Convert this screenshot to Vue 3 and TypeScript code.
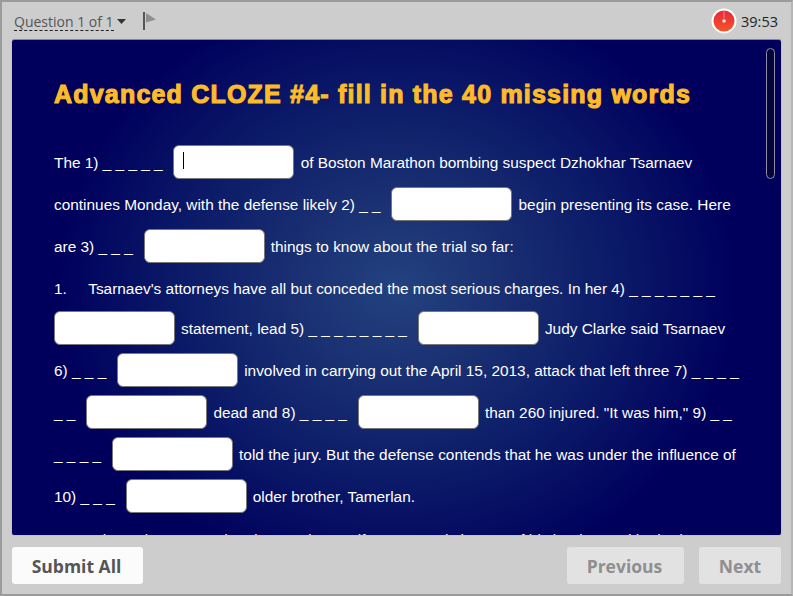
<script setup lang="ts">
type Part = { t: string } | { gap: true }
const T = (t: string): Part => ({ t })
const G: Part = { gap: true }
const lines: { parts: Part[]; short?: boolean }[] = [
  { parts: [T('The 1) _ _ _ _ _'), G, T('of Boston Marathon bombing suspect Dzhokhar Tsarnaev')] },
  { parts: [T('continues Monday, with the defense likely 2) _ _'), G, T('begin presenting its case. Here')] },
  { parts: [T('are 3) _ _ _'), G, T('things to know about the trial so far:')] },
  { parts: [T('1.\u00a0\u00a0\u00a0\u00a0\u00a0Tsarnaev\'s attorneys have all but conceded the most serious charges. In her 4) _ _ _ _ _ _ _')], short: true },
  { parts: [G, T('statement, lead 5) _ _ _ _ _ _ _ _'), G, T('Judy Clarke said Tsarnaev')] },
  { parts: [T('6) _ _ _'), G, T('involved in carrying out the April 15, 2013, attack that left three 7) _ _ _ _')] },
  { parts: [T('_ _'), G, T('dead and 8) _ _ _ _'), G, T('than 260 injured. "It was him," 9) _ _')] },
  { parts: [T('_ _ _ _'), G, T('told the jury. But the defense contends that he was under the influence of')] },
  { parts: [T('10) _ _ _'), G, T('older brother, Tamerlan.')] },
  { parts: [T('Several people contacted and wanted to testify on several charges of his brother and he had')] },
]
</script>

<template>
  <div class="frame">
    <header class="top">
      <div class="q">
        <span class="qlabel">Question 1 of 1</span>
        <svg class="caret" width="9" height="5" viewBox="0 0 9 5"><path d="M0 0h9L4.5 5z" fill="#333" /></svg>
        <svg class="flag" width="14" height="18" viewBox="0 0 14 18">
          <rect x="0" y="0" width="2" height="18" fill="#555" />
          <path d="M3 1l10 6.500-10 3z" fill="#8f8f8f" />
        </svg>
      </div>
      <div class="timer">
        <svg width="26" height="26" viewBox="0 0 26 26">
          <circle cx="13" cy="13" r="12.500" fill="#fff" />
          <defs>
            <linearGradient id="rg" x1="0" y1="0" x2="0" y2="1">
              <stop offset="0" stop-color="#e8283a" />
              <stop offset="1" stop-color="#f4552a" />
            </linearGradient>
          </defs>
          <circle cx="13" cy="13" r="10.500" fill="url(#rg)" />
          <path d="M13 2.500v8" stroke="#f7b0a8" stroke-width="0.700" />
          <circle cx="13" cy="13" r="1.800" fill="#fbe3dc" />
        </svg>
        <span>39:53</span>
      </div>
    </header>

    <main class="panel">
      <div class="scrollarea">
        <h1>Advanced CLOZE #4- fill in the 40 missing words</h1>
        <div v-for="(line, i) in lines" :key="i" class="line" :class="{ short: line.short }">
          <template v-for="(p, j) in line.parts" :key="j">
            <span v-if="'t' in p" class="txt">{{ p.t }}</span>
            <span v-else class="blank" :class="{ caretted: i === 0 }"></span>
          </template>
        </div>
      </div>
      <div class="thumb"></div>
    </main>

    <footer class="bottom">
      <button class="btn submit">Submit All</button>
      <div class="nav">
        <button class="btn off prev">Previous</button>
        <button class="btn off next">Next</button>
      </div>
    </footer>
  </div>
</template>

<style>
html, body { margin: 0; background: #ccc; }
</style>

<style scoped>
.frame {
  box-sizing: border-box;
  width: 793px;
  height: 596px;
  background: #cdcdcd;
  border: 2px solid #9b9b9b;
  border-right-color: #b5b5b5;
  border-bottom-color: #9b9b9b;
  padding: 0 10px 0 10px;
  display: flex;
  flex-direction: column;
  font-family: "Open Sans", sans-serif;
}
.top {
  height: 38px;
  flex: none;
  display: flex;
  justify-content: space-between;
  align-items: center;
  color: #444;
}
.q { display: flex; align-items: center; padding-left: 2px; padding-top: 1px; }
.qlabel {
  font-size: 14px;
  line-height: 17px;
  border-bottom: 1px dashed #222;
  color: #555;
}
.caret { margin-left: 3px; }
.flag { margin-left: 17px; margin-top: -1px; }
.timer {
  display: flex;
  align-items: center;
  gap: 4px;
  padding-right: 3px;
  font-size: 14.500px;
  color: #222;
}
.panel {
  position: relative;
  flex: none;
  height: 495px;
  overflow: hidden;
  border-radius: 2px;
  box-shadow: 0 -1px 0 #8a8a8a, 0 0 1px #777;
  background: radial-gradient(ellipse 340px 300px at 385px 247px, #23427f 0%, #1a3072 30%, #0b1a68 65%, #00005c 100%);
  color: #fff;
  font-family: "Liberation Sans", Arial, sans-serif;
  font-size: 15.400px;
}
.scrollarea { padding: 38px 0 0 42px; }
h1 {
  margin: 0 0 31px;
  font-size: 25px;
  line-height: 32px;
  font-weight: 700;
  letter-spacing: 1.200px;
  -webkit-text-stroke: 1.100px #fdbb28;
  color: #fdbb28;
  white-space: nowrap;
}
.line {
  height: 42px;
  display: flex;
  align-items: center;
  white-space: pre;
}
.txt { padding-top: 2px; }
.line.short { height: 40px; }
.line.short .txt { padding-top: 4px; }
.line:last-child .txt { padding-top: 3px; }
.blank {
  box-sizing: border-box;
  position: relative;
  width: 121px;
  height: 34px;
  margin: 0 6.200px 0 10.800px;
  background: #fff;
  border: 1px solid #777;
  border-radius: 6px;
  flex: none;
}
.blank:first-child { margin-left: 0; margin-right: 6px; }
.caretted::after {
  content: "";
  position: absolute;
  left: 9px;
  top: 6px;
  width: 1px;
  height: 17px;
  background: #000;
}
.thumb {
  position: absolute;
  left: 754px;
  top: 8px;
  width: 7px;
  height: 129px;
  background: #04043a;
  border: 1px solid #8d8da8;
  border-radius: 5px;
}
.bottom {
  flex: none;
  display: flex;
  justify-content: space-between;
  padding-top: 12px;
}
.nav { display: flex; gap: 15px; }
.btn {
  height: 37px;
  width: 131px;
  background: #fbfbfb;
  border: none;
  border-radius: 3px;
  font-family: "Open Sans", sans-serif;
  font-weight: 700;
  font-size: 17.500px;
  color: #555;
  padding: 0;
}
.submit { padding-right: 2px; }
.btn.off { background: #e2e2e2; color: #8f8f8f; }
.prev { width: 117px; padding-right: 2px; }
.next { width: 82px; }
</style>
